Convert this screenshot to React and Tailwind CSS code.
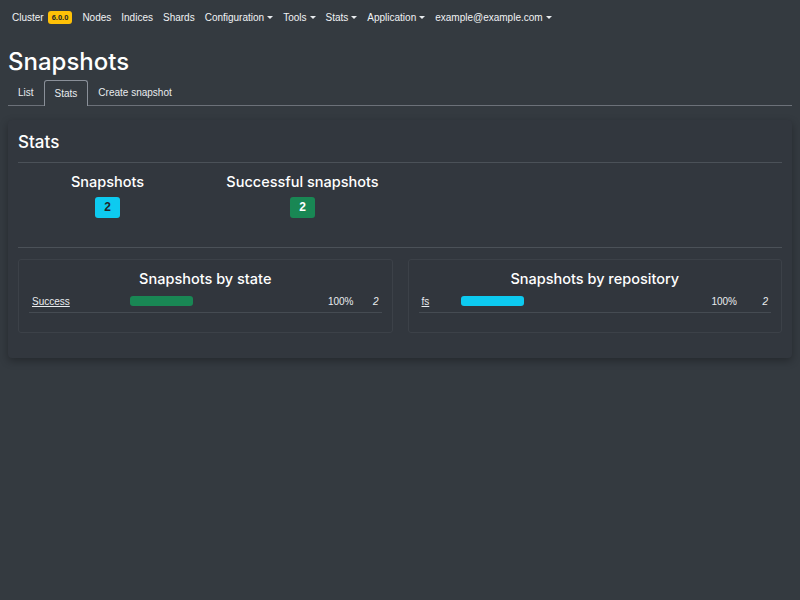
import React from "react";

function Caret() {
  return (
    <span className="ml-[3px] inline-block h-0 w-0 border-x-[3px] border-t-[3.5px] border-x-transparent border-t-[#e9ecef] align-middle" />
  );
}

function NavItem({ children, caret }) {
  return (
    <div className="flex items-center px-[5px]">
      <span>{children}</span>
      {caret && <Caret />}
    </div>
  );
}

function StatRow({ label, labelW, countW, barColor }) {
  return (
    <div className="mt-[3px] flex items-center border-b border-[#454b52] py-[3px] text-[10px] leading-[15px]">
      <div className="px-[3px]" style={{ width: labelW }}>
        <span className="underline">{label}</span>
      </div>
      <div className="flex-1 px-[3px]">
        <div className={`h-[10px] w-[63px] rounded-[3px] ${barColor}`} />
      </div>
      <div className="px-[3px] text-right">100%</div>
      <div className="px-[3px] text-right italic" style={{ width: countW }}>
        2
      </div>
    </div>
  );
}

export default function App() {
  return (
    <div className="min-h-[600px] w-[800px] bg-[#343a40] font-['Liberation_Sans',Arial,sans-serif] text-[#e9ecef]">
      <nav className="flex h-[35px] items-center pl-[7px] text-[10px] text-[#f1f3f5]">
        <div className="flex items-center px-[5px]">
          <span>Cluster</span>
          <span className="ml-[4px] rounded-[3px] bg-[#ffc107] px-[4px] py-[2px] text-[7.5px] font-bold leading-[9px] text-[#212529]">
            6.0.0
          </span>
        </div>
        <NavItem>Nodes</NavItem>
        <NavItem>Indices</NavItem>
        <NavItem>Shards</NavItem>
        <NavItem caret>Configuration</NavItem>
        <NavItem caret>Tools</NavItem>
        <NavItem caret>Stats</NavItem>
        <NavItem caret>Application</NavItem>
        <NavItem caret>example@example.com</NavItem>
      </nav>

      <div className="px-[8px]">
        <h1 className="mt-[12px] font-['Inter',sans-serif] text-[24px] font-medium leading-[29px] text-white">Snapshots</h1>
        <div className="mt-[4px] flex border-b-[1.5px] border-[#6c7179] text-[10px] leading-[15px]">
          <div className="mb-[-1.5px] px-[10px] py-[5px]">List</div>
          <div className="mb-[-1.5px] rounded-t-[3px] border border-b-0 border-[#8a9099] bg-[#343a40] px-[10px] py-[5px]">
            Stats
          </div>
          <div className="mb-[-1.5px] px-[10px] py-[5px]">Create snapshot</div>
        </div>

        <div className="mt-[14px] rounded-[4px] bg-[#32373e] px-[10px] pb-[25px] pt-[12px] shadow-[0_3px_8px_rgba(0,0,0,0.3)]">
          <div className="border-b-[1.5px] border-[#4b5158] pb-[9px] font-['Inter',sans-serif] text-[17px] font-medium leading-[21px] text-white">
            Stats
          </div>
          <div className="ml-[-8px] flex pt-[10px]">
            <div className="flex w-[195px] flex-col items-center">
              <div className="font-['Inter',sans-serif] text-[14.5px] font-medium leading-[18px] text-white">Snapshots</div>
              <div className="mt-[6px] flex h-[21px] w-[25px] items-center justify-center rounded-[3px] bg-[#0dcaf0] text-[12px] font-bold text-[#212529]">
                2
              </div>
            </div>
            <div className="flex w-[195px] flex-col items-center">
              <div className="font-['Inter',sans-serif] text-[14.5px] font-medium leading-[18px] text-white">Successful snapshots</div>
              <div className="mt-[6px] flex h-[21px] w-[25px] items-center justify-center rounded-[3px] bg-[#198754] text-[12px] font-bold text-white">
                2
              </div>
            </div>
          </div>
          <div className="mt-[29px] border-t-[1.5px] border-[#4b5158]" />

          <div className="mt-[11px] flex gap-[15px]">
            <div className="flex-1 rounded-[3px] border border-[#3c4148] bg-[#31363d] px-[10px] pb-[19px] pt-[10px]">
              <div className="text-center font-['Inter',sans-serif] text-[14.5px] font-medium leading-[18px] text-white">Snapshots by state</div>
              <StatRow label="Success" labelW={98} countW={25} barColor="bg-[#198754]" />
            </div>
            <div className="flex-1 rounded-[3px] border border-[#3c4148] bg-[#31363d] px-[10px] pb-[19px] pt-[10px]">
              <div className="text-center font-['Inter',sans-serif] text-[14.5px] font-medium leading-[18px] text-white">Snapshots by repository</div>
              <StatRow label="fs" labelW={39} countW={31} barColor="bg-[#0dcaf0]" />
            </div>
          </div>
        </div>
      </div>
    </div>
  );
}
